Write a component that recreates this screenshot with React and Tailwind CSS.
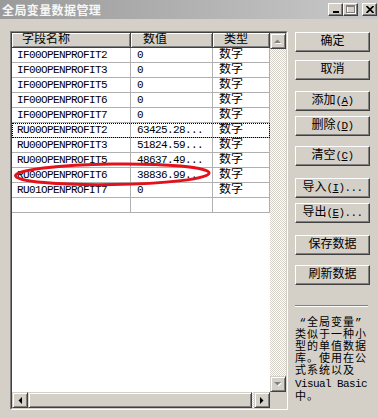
const F = "font-['Liberation_Mono','Noto_Sans_CJK_SC',monospace]";

const rows = [
  ["IF00OPENPROFIT2", "0"],
  ["IF00OPENPROFIT3", "0"],
  ["IF00OPENPROFIT5", "0"],
  ["IF00OPENPROFIT6", "0"],
  ["IF00OPENPROFIT7", "0"],
  ["RU00OPENPROFIT2", "63425.28..."],
  ["RU00OPENPROFIT3", "51824.59..."],
  ["RU00OPENPROFIT5", "48637.49..."],
  ["RU00OPENPROFIT6", "38836.99..."],
  ["RU01OPENPROFIT7", "0"],
];

const raised =
  "bg-[#d4d0c8] border border-t-[#d4d0c8] border-l-[#d4d0c8] border-r-[#404040] border-b-[#404040] shadow-[inset_1px_1px_#ffffff,inset_-1px_-1px_#808080]";

function WinBtn({ children, className = "" }) {
  return (
    <div
      className={`w-[15px] h-[13px] bg-[#d4d0c8] border border-t-white border-l-white border-r-[#404040] border-b-[#404040] shadow-[inset_-1px_-1px_#808080] flex items-center justify-center ${className}`}
    >
      {children}
    </div>
  );
}

function HeadCell({ className, children }) {
  return (
    <div
      className={`h-[15px] bg-[#d4d0c8] border-r border-b border-r-[#404040] border-b-[#404040] shadow-[inset_1px_1px_#ffffff,inset_-1px_-1px_#808080] text-[12px] leading-[14px] whitespace-nowrap overflow-hidden ${className}`}
    >
      {children}
    </div>
  );
}

function Row({ name, value, type, focus }) {
  return (
    <div
      className={`flex h-[15px] border-b border-b-[#b0b0b0] ${
        focus ? "outline outline-1 outline-dotted outline-black -outline-offset-1" : ""
      }`}
    >
      <div className="w-[119px] border-r border-r-[#b0b0b0] pl-[5px] text-[11px] tracking-[-0.6px] leading-[15px] whitespace-nowrap overflow-hidden">
        {name}
      </div>
      <div className="w-[82px] border-r border-r-[#b0b0b0] pl-[6px] text-[11px] tracking-[-0.6px] leading-[15px] whitespace-nowrap overflow-hidden">
        {value}
      </div>
      <div className="w-[57px] border-r border-r-[#b0b0b0] pl-[6px] text-[12px] leading-[14px] whitespace-nowrap overflow-hidden">
        {type}
      </div>
    </div>
  );
}

function ArrowUp({ disabled }) {
  return (
    <svg width="8" height="5" viewBox="0 0 8 5">
      {disabled && <polygon points="1,5 4.5,1.5 8,5" fill="#ffffff" />}
      <polygon points="0,4 3.5,0.5 7,4" fill={disabled ? "#808080" : "#000"} />
    </svg>
  );
}
function ArrowDown({ disabled }) {
  return (
    <svg width="8" height="5" viewBox="0 0 8 5">
      {disabled && <polygon points="1,1 8,1 4.5,4.5" fill="#ffffff" />}
      <polygon points="0,0 7,0 3.5,3.5" fill={disabled ? "#808080" : "#000"} />
    </svg>
  );
}
function ArrowLeft() {
  return (
    <svg width="4" height="7" viewBox="0 0 4 7">
      <polygon points="4,0 4,7 0.5,3.5" fill="#000" />
    </svg>
  );
}
function ArrowRight() {
  return (
    <svg width="4" height="7" viewBox="0 0 4 7">
      <polygon points="0,0 0,7 3.5,3.5" fill="#000" />
    </svg>
  );
}

function DlgBtn({ children, className = "" }) {
  return (
    <div
      className={`h-[20px] w-[75px] bg-[#d4d0c8] border border-t-white border-l-white border-r-[#404040] border-b-[#404040] shadow-[inset_-1px_-1px_#808080] flex items-center justify-center text-[12px] leading-[14px] whitespace-nowrap ${className}`}
    >
      {children}
    </div>
  );
}

function L({ children }) {
  return <span className="text-[11px] tracking-[-0.6px]">{children}</span>;
}

export default function App() {
  return (
    <div className={`w-[378px] h-[418px] bg-[#d4d0c8] overflow-hidden text-black ${F}`}>
      {/* title bar */}
      <div className="h-[19px] flex items-center bg-linear-to-r from-[#9a9a9a] to-[#c9c9c9] pl-[2px] pr-[1px]">
        <span className="text-[12px] font-bold text-[#f6f6f6] leading-[19px] tracking-[0.4px] font-['Noto_Sans_CJK_SC',sans-serif]">
          全局变量数据管理
        </span>
        <div className="ml-auto flex items-center">
          <WinBtn>
            <svg width="8" height="7" viewBox="0 0 8 7">
              <rect x="1" y="5" width="6" height="2" fill="#000" />
            </svg>
          </WinBtn>
          <WinBtn>
            <svg width="10" height="9" viewBox="0 0 10 9">
              <rect x="1.5" y="1.5" width="8" height="7" fill="none" stroke="#ffffff" strokeWidth="1" />
              <rect x="0.5" y="0.5" width="8" height="7" fill="none" stroke="#808080" strokeWidth="1" />
              <rect x="0" y="0" width="9" height="2" fill="#808080" />
            </svg>
          </WinBtn>
          <WinBtn className="ml-[4px]">
            <svg width="8" height="7" viewBox="0 0 8 7">
              <path d="M0.5 0 L7.5 7 M7.5 0 L0.5 7" stroke="#000" strokeWidth="1.7" />
            </svg>
          </WinBtn>
        </div>
      </div>

      <div className="flex pt-[12px]">
        {/* grid */}
        <div className="ml-[10px] w-[278px] h-[379px] border border-t-[#808080] border-l-[#808080] border-r-white border-b-white">
          <div className="w-full h-full border border-t-[#404040] border-l-[#404040] border-r-[#d4d0c8] border-b-[#d4d0c8] flex flex-col bg-white">
            <div className="flex h-[359px]">
              <div className="relative w-[258px] h-full bg-white">
                <div className="flex h-[15px]">
                  <HeadCell className="w-[119px] pl-[10px]">字段名称</HeadCell>
                  <HeadCell className="w-[82px] pl-[12px]">数值</HeadCell>
                  <HeadCell className="w-[57px] pl-[11px]">类型</HeadCell>
                </div>
                {rows.map((r, i) => (
                  <Row key={r[0]} name={r[0]} value={r[1]} type="数字" focus={i === 5} />
                ))}
                <Row name="" value="" type="" />
                <svg
                  className="absolute left-0 top-0 pointer-events-none"
                  width="258"
                  height="359"
                  viewBox="0 0 258 359"
                >
                  <ellipse
                    cx="100.3"
                    cy="141.3"
                    rx="96.8"
                    ry="10.3"
                    fill="none"
                    stroke="#e3111b"
                    strokeWidth="3"
                    transform="rotate(-0.8 100.3 141.3)"
                  />
                </svg>
              </div>
              {/* vertical scrollbar */}
              <div className="w-[16px] h-full flex flex-col">
                <div className={`h-[16px] flex items-center justify-center ${raised}`}>
                  <ArrowUp disabled />
                </div>
                <div className="flex-1 bg-[image:repeating-conic-gradient(#d4d0c8_0%_25%,#ffffff_0%_50%)] bg-size-[2px_2px]" />
                <div className={`h-[16px] flex items-center justify-center ${raised}`}>
                  <ArrowDown disabled />
                </div>
              </div>
            </div>
            <div className="flex h-[16px]">
              <div className="w-[258px] flex">
                <div className={`w-[16px] h-full flex items-center justify-center ${raised}`}>
                  <ArrowLeft />
                </div>
                <div className={`w-[224px] h-full ${raised}`} />
                <div className="flex-1 bg-[image:repeating-conic-gradient(#d4d0c8_0%_25%,#ffffff_0%_50%)] bg-size-[2px_2px]" />
                <div className={`w-[16px] h-full flex items-center justify-center ${raised}`}>
                  <ArrowRight />
                </div>
              </div>
              <div className="w-[16px] h-full bg-[#d4d0c8]" />
            </div>
          </div>
        </div>

        {/* right column */}
        <div className="ml-[7px] w-[75px] flex flex-col">
          <DlgBtn className="mt-[1px]">确定</DlgBtn>
          <DlgBtn className="mt-[8px]">取消</DlgBtn>
          <DlgBtn className="mt-[11px]">
            添加<L>(<u>A</u>)</L>
          </DlgBtn>
          <DlgBtn className="mt-[5px]">
            删除<L>(<u>D</u>)</L>
          </DlgBtn>
          <DlgBtn className="mt-[10px]">
            清空<L>(<u>C</u>)</L>
          </DlgBtn>
          <DlgBtn className="mt-[12px]">
            导入<L>(<u>I</u>)...</L>
          </DlgBtn>
          <DlgBtn className="mt-[5px]">
            导出<L>(<u>E</u>)...</L>
          </DlgBtn>
          <DlgBtn className="mt-[12px]">保存数据</DlgBtn>
          <DlgBtn className="mt-[10px]">刷新数据</DlgBtn>

          <div className="mt-[20px] w-[73px] h-[2px] border-t border-t-[#808080] border-b border-b-white" />

          <div className="mt-[10px] text-[11px] leading-[12px] tracking-[1px] whitespace-nowrap">
            <div>
              <span className="inline-block w-[12px] text-right">“</span>全局变量
              <span className="inline-block w-[12px] text-left">”</span>
            </div>
            <div>类似于一种小</div>
            <div>型的单值数据</div>
            <div>库。使用在公</div>
            <div>式系统以及</div>
            <div className="tracking-[-0.6px] leading-[14px]">Visual Basic</div>
            <div>中。</div>
          </div>
        </div>
      </div>
    </div>
  );
}
